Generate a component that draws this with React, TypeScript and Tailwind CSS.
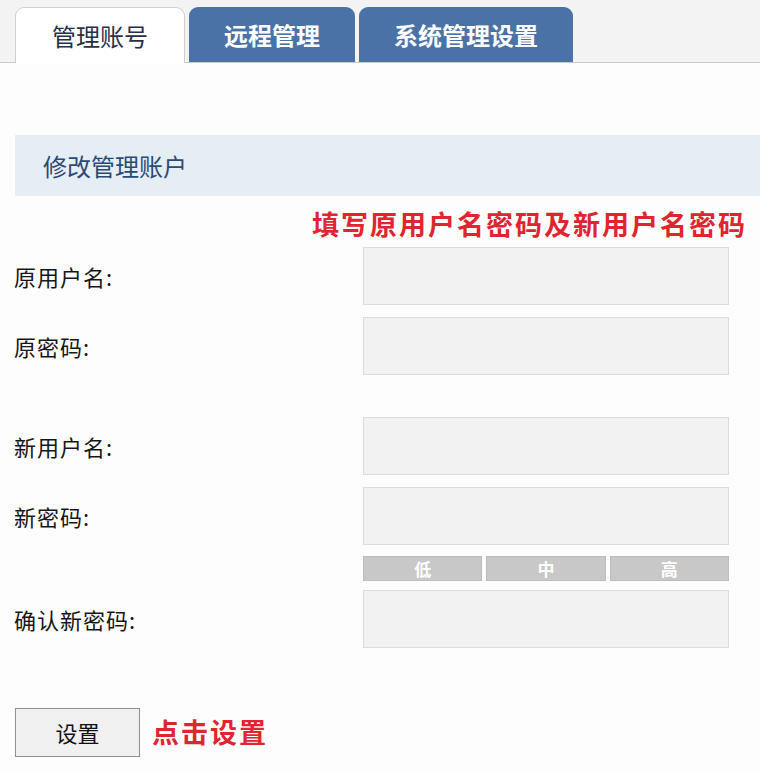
import React from "react";

const font = { fontFamily: '"Noto Sans CJK SC", "Noto Sans", sans-serif' };

function Row({ label, className = "" }: { label: string; className?: string }) {
  return (
    <div className={`flex items-center ${className}`}>
      <div className="w-[363px] pl-[14px] text-[22px] tracking-[1px] text-[#161616] leading-none">{label}</div>
      <div className="w-[366px] h-[58px] bg-[#f2f2f2] border border-[#dcdcdc]" />
    </div>
  );
}

export default function App() {
  return (
    <div className="w-[760px] h-[772px] bg-[#fdfdfd] overflow-hidden" style={font}>
      <div className="h-[63px] bg-[#f3f3f3] border-b border-[#c8c8c8] flex items-end pl-[15px] gap-[4px]">
        <div className="w-[170px] h-[56px] -mb-px bg-white border border-[#cfcfcf] border-b-0 rounded-t-[9px] flex items-center justify-center text-[24px] text-[#26304a]">
          管理账号
        </div>
        <div className="w-[166px] h-[55px] bg-[#4b72a6] rounded-t-[9px] flex items-center justify-center text-[24px] text-white font-bold">
          远程管理
        </div>
        <div className="w-[214px] h-[55px] bg-[#4b72a6] rounded-t-[9px] flex items-center justify-center text-[24px] text-white font-bold">
          系统管理设置
        </div>
      </div>

      <div className="mt-[72px] ml-[15px] h-[61px] bg-[#e5edf5] flex items-center pl-[28px] text-[24px] text-[#2a4a73]">
        修改管理账户
      </div>

      <div className="mt-[13px] pr-[13px] text-right text-[27px] tracking-[2px] font-bold text-[#e02430] leading-[30px]">
        填写原用户名密码及新用户名密码
      </div>

      <Row label="原用户名:" className="mt-[8px]" />
      <Row label="原密码:" className="mt-[12px]" />
      <Row label="新用户名:" className="mt-[42px]" />
      <Row label="新密码:" className="mt-[12px]" />

      <div className="flex mt-[11px]">
        <div className="w-[363px]" />
        <div className="w-[366px] h-[25px] flex gap-[4px]">
          {["低", "中", "高"].map((t) => (
            <div key={t} className="flex-1 bg-[#c8c8c8] border border-[#bdbdbd] flex items-center justify-center text-[17px] font-bold text-white leading-none">
              {t}
            </div>
          ))}
        </div>
      </div>

      <Row label="确认新密码:" className="mt-[9px]" />

      <div className="mt-[60px] pl-[15px] flex items-center gap-[12px]">
        <div className="w-[125px] h-[49px] bg-[#f0f0f0] border border-[#8f8f8f] flex items-center justify-center text-[22px] text-[#111]">
          设置
        </div>
        <div className="text-[27px] font-bold text-[#e02430] tracking-[2px]">点击设置</div>
      </div>
    </div>
  );
}
